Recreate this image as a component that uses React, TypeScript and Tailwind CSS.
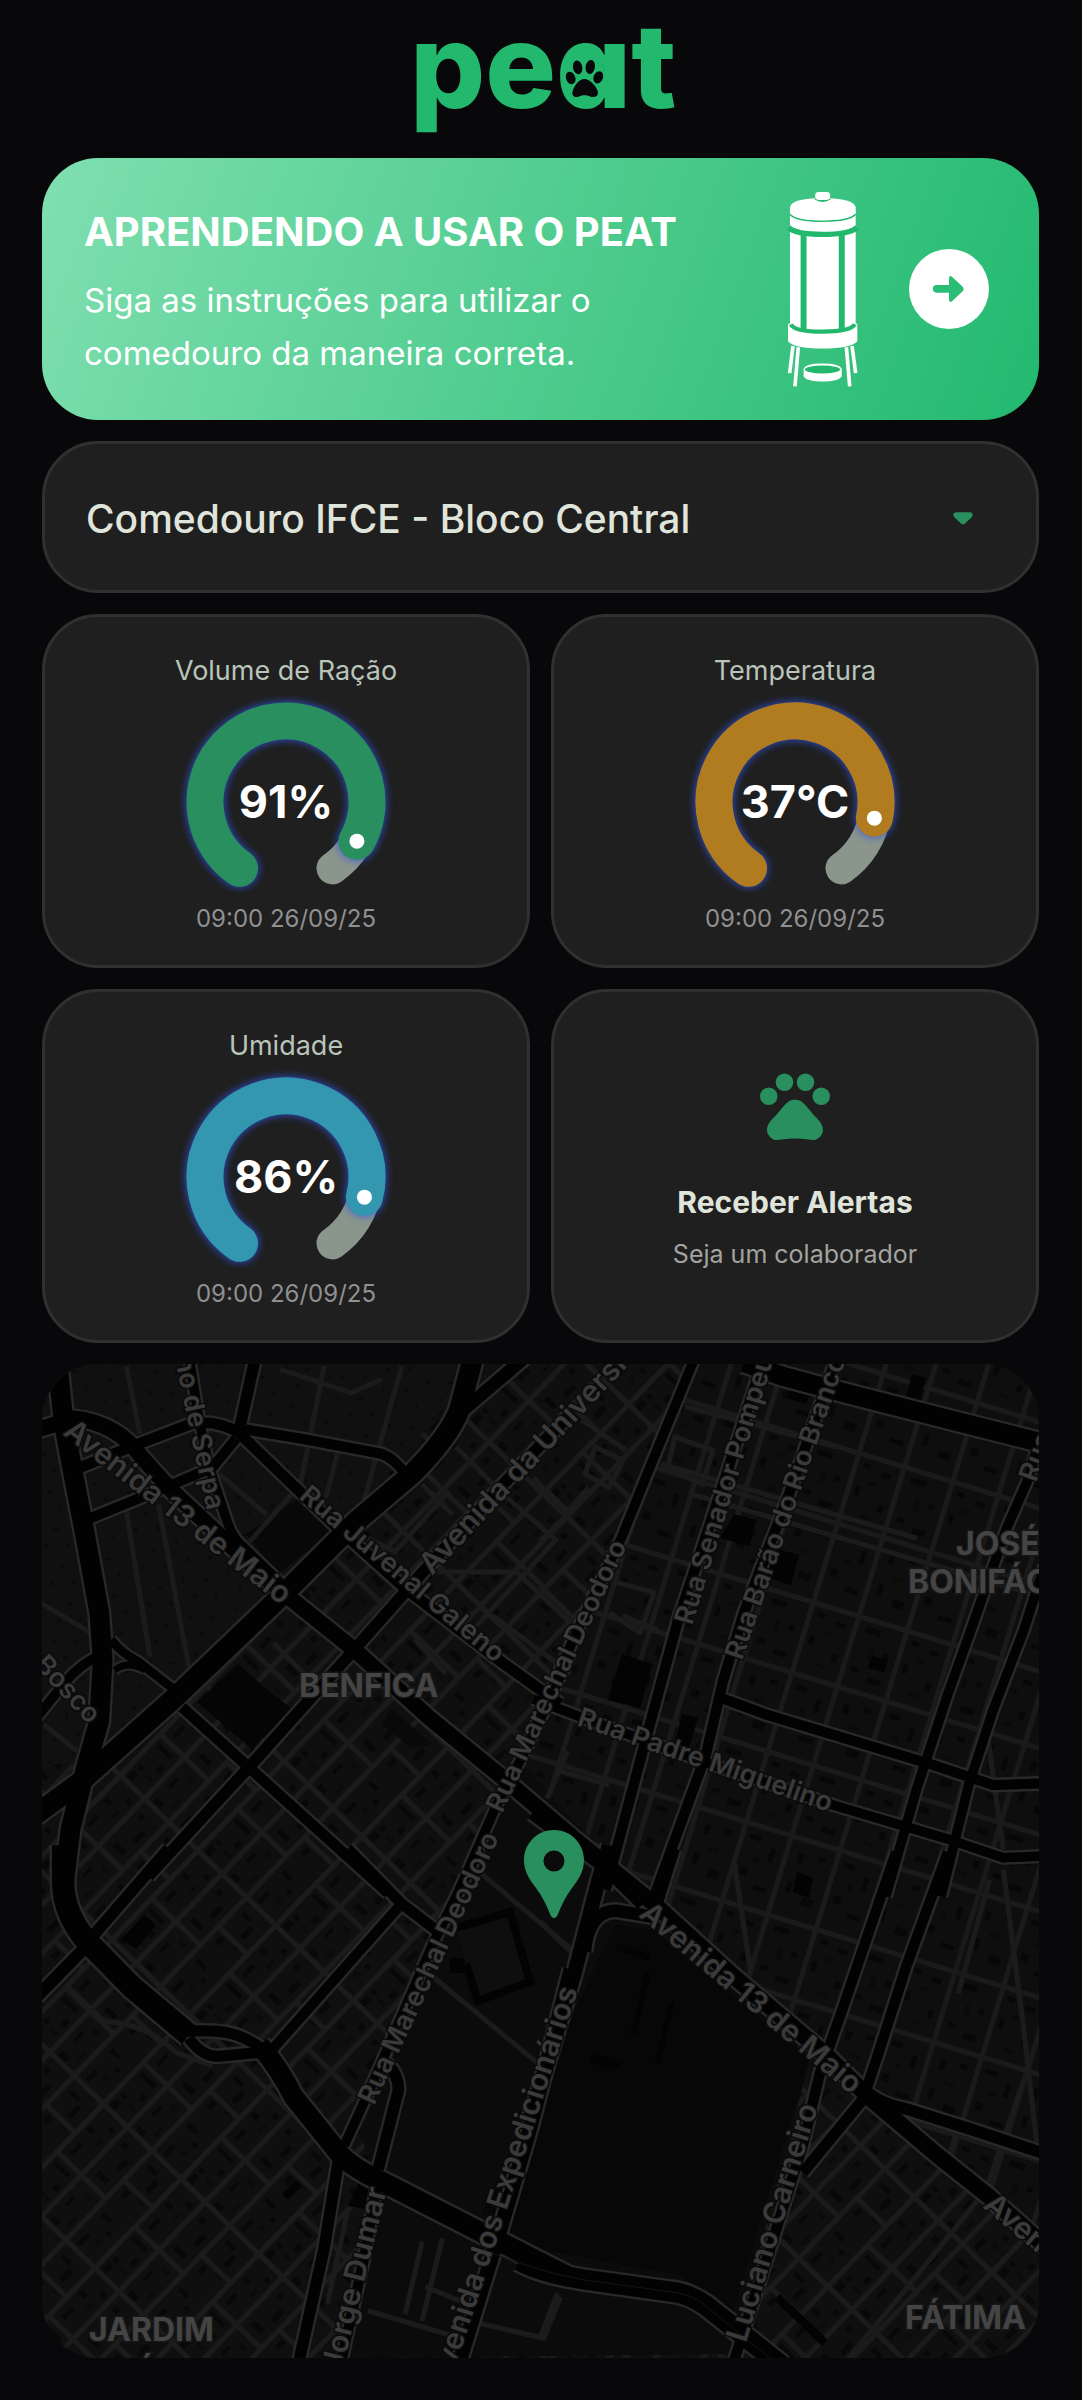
import React from "react";
import { MdPets } from "react-icons/md";

/* ---------- Logo ---------- */

function Logo() {
  return (
    <svg
      viewBox="0 0 270 158"
      className="h-[158px] w-[270px] overflow-visible"
      role="img"
      aria-label="peat"
    >
      <text
        x="4"
        y="108"
        className="fill-[#22b96f] font-['Inter',sans-serif] text-[118px] font-extrabold [font-feature-settings:'cv11']"
      >
        peat
      </text>
      <ellipse cx="178" cy="78" rx="22" ry="25" fill="#22b96f" />
      <g transform="translate(-26 0) scale(0.3333)" fill="#09090b">
        <ellipse cx="572" cy="234" rx="14" ry="19" transform="rotate(-22 572 234)" />
        <ellipse cx="593" cy="202" rx="14" ry="21" transform="rotate(-10 593 202)" />
        <ellipse cx="631" cy="201" rx="14" ry="21" transform="rotate(10 631 201)" />
        <ellipse cx="655" cy="232" rx="14" ry="19" transform="rotate(22 655 232)" />
        <path d="M613 237C598 237 585 254 579 270C572 288 585 294 596 290C606 284 622 284 632 290C648 294 658 286 652 270C645 254 628 237 613 237Z" />
      </g>
    </svg>
  );
}

/* ---------- Banner ---------- */

function FeederIcon() {
  return (
    <svg viewBox="140 118 220 596" className="h-[199px] w-[73px] shrink-0" aria-hidden="true">
      <g stroke="#fff" strokeWidth="11">
        <path d="M161 586L151 668M177 590L167 708M322 590L332 708M339 586L350 668" />
      </g>
      <path
        d="M146 520Q150 516 155 522H346Q352 516 355 520V572Q335 594 250 594Q165 594 146 572Z"
        fill="#fff"
      />
      <path d="M152 236H350V526Q325 542 250 542Q175 542 152 526Z" fill="#fff" />
      <path d="M184 246H202V540H184ZM299 246H317V540H299Z" fill="#22b96f" />
      <path d="M155 521Q165 543 250 543Q335 543 347 521" fill="none" stroke="#22b96f" strokeWidth="13" />
      <path d="M152 180H350V222Q330 242 250 242Q170 242 152 222Z" fill="#fff" />
      <path d="M148 230Q170 250 250 250Q330 250 354 230" fill="none" stroke="#22b96f" strokeWidth="16" />
      <path d="M152 189Q170 210 250 210Q330 210 350 189" fill="none" stroke="#22b96f" strokeWidth="5" />
      <path
        d="M152 168Q156 141 250 140Q344 141 350 168V184Q338 207 250 208Q162 207 152 184Z"
        fill="#fff"
      />
      <path d="M228 142Q250 156 273 142" fill="none" stroke="#22b96f" strokeWidth="6" />
      <rect x="228" y="122" width="45" height="24" rx="10" fill="#fff" />
      <path
        d="M193 656Q197 639 250 639Q303 639 308 656V678Q298 693 250 693Q202 693 193 678Z"
        fill="#fff"
      />
      <ellipse cx="250" cy="657" rx="53" ry="12" fill="#22b96f" />
    </svg>
  );
}

function Banner() {
  return (
    <section className="flex items-center rounded-[56px] bg-[linear-gradient(110deg,#7fdfb0_0%,#22b96f_100%)] pt-[50px] pr-[50px] pb-10 pl-[42px] text-white">
      <div className="flex-1">
        <h1 className="text-[40px] leading-[48px] font-bold">APRENDENDO A USAR O PEAT</h1>
        <p className="mt-[18px] max-w-[560px] text-[33px] leading-[53px]">
          Siga as instruções para utilizar o comedouro da maneira correta.
        </p>
      </div>
      <div className="-my-10 flex -translate-y-[5px] items-center gap-[50px]">
        <FeederIcon />
        <button
          type="button"
          aria-label="Abrir instruções"
          className="flex size-20 items-center justify-center rounded-full bg-white"
        >
          <svg viewBox="510 296 240 240" className="size-20" aria-hidden="true">
            <path
              d="M593 404H630V385Q630 372 640 380L671 409Q677 416 671 423L640 452Q630 460 630 447V427H593A11 11 0 0 1 593 404Z"
              fill="#2bbd76"
            />
          </svg>
        </button>
      </div>
    </section>
  );
}

/* ---------- Feeder picker ---------- */

function FeederSelect() {
  return (
    <div className="relative">
      <select
        aria-label="Comedouro"
        className="h-[152px] w-full appearance-none rounded-[56px] border-[3px] border-[#303030] bg-[#1f1f1f] pt-1 pr-32 pl-[41px] text-[39px] font-medium text-[#e0e5dc]"
      >
        <option>Comedouro IFCE - Bloco Central</option>
      </select>
      <svg
        viewBox="0 0 60 38"
        className="pointer-events-none absolute top-[71px] right-[66px] h-[13px] w-5"
        aria-hidden="true"
      >
        <path
          d="M10 0H50C59 0 62 9 56 15L36 34Q30 40 24 34L4 15C-2 9 1 0 10 0Z"
          fill="#298f5e"
        />
      </svg>
    </div>
  );
}

/* ---------- Gauges ---------- */

const CENTER = 110;
const RADIUS = 81;
const GAP = 35;

// Angles run clockwise from the bottom of the dial.
function point(angle: number) {
  const a = (angle * Math.PI) / 180;
  return { x: CENTER - RADIUS * Math.sin(a), y: CENTER + RADIUS * Math.cos(a) };
}

function arc(from: number, to: number) {
  const a = point(from);
  const b = point(to);
  return `M${a.x} ${a.y}A${RADIUS} ${RADIUS} 0 ${to - from > 180 ? 1 : 0} 1 ${b.x} ${b.y}`;
}

type GaugeProps = {
  label: string;
  value: string;
  fraction: number;
  time: string;
  color: string;
};

function GaugeCard({ label, value, fraction, time, color }: GaugeProps) {
  const end = GAP + (360 - 2 * GAP) * fraction;
  const dot = point(end);
  return (
    <article className="flex flex-col items-center rounded-[56px] border-[3px] border-[#303030] bg-[#1f1f1f] pt-9 pb-7">
      <h2 className="text-[27px] leading-9 text-[#b9c4ba]">{label}</h2>
      <svg
        viewBox="0 0 220 200"
        className="mt-[3px] h-[200px] w-[220px]"
        role="img"
        aria-label={`${label}: ${value}`}
      >
        <path
          d={arc(GAP, 360 - GAP)}
          fill="none"
          stroke="#8a958c"
          strokeWidth="32"
          strokeLinecap="round"
        />
        <g className="drop-shadow-[0_0_4px_#2f55e0]">
          <path d={arc(GAP, end)} fill="none" stroke={color} strokeWidth="37" strokeLinecap="round" />
        </g>
        <circle cx={dot.x} cy={dot.y} r="7.5" fill="#fff" />
        <text
          x={CENTER}
          y="126"
          textAnchor="middle"
          className="fill-white font-['Inter',sans-serif] text-[45px] font-bold"
        >
          {value}
        </text>
      </svg>
      <time className="mt-[9px] text-2xl leading-9 text-[#909090]">{time}</time>
    </article>
  );
}

function AlertsCard() {
  return (
    <button
      type="button"
      className="flex flex-col items-center justify-center rounded-[56px] border-[3px] border-[#303030] bg-[#1f1f1f] pt-0.5"
    >
      <MdPets className="size-[84px] text-[#298f5e]" aria-hidden="true" />
      <span className="mt-[35px] text-[30px] leading-10 font-bold text-[#e0e5dc]">
        Receber Alertas
      </span>
      <span className="mt-3.5 text-[25px] leading-9 text-[#a3a3a0]">Seja um colaborador</span>
    </button>
  );
}

/* ---------- Map ---------- */

type Road = [width: number, d: string];
type Tile = { transform: string; major: Road[]; minor: string };

const TILES: Tile[] = [
  {
    transform: "translate(-12 -15) scale(0.338)",
    major: [
      [58, "M80 30L100 220L130 380L165 560L205 780L215 920L205 1100L165 1240L120 1420L98 1600"],
      [60, "M0 1390L150 1280L430 1030L760 715L960 515L1130 370Q1240 260 1270 180L1310 30"],
      [38, "M1270 190L1330 140L1470 20"],
      [46, "M20 240L130 205Q260 220 330 320L420 420L640 625L760 730L960 890L1180 1090L1400 1270L1600 1440"],
      [32, "M150 350L310 285L480 220Q560 210 620 250L770 395L900 520L1100 700L1400 930L1568 1050"],
      [30, "M620 235L800 265L1040 310Q1080 325 1110 370"],
      [34, "M668 20L620 235"],
      [30, "M180 500L400 410L540 350L610 265"],
      [28, "M470 20L500 210L530 350L580 500Q595 550 620 575L750 700"],
      [34, "M350 1560L650 1235L950 900L1180 640L1400 400L1600 190"],
      [32, "M450 1060L650 1240L1060 1610"],
      [26, "M240 860Q270 900 320 925L430 1010"],
      [28, "M20 1090L100 990Q150 930 210 905"],
      [20, "M250 950Q290 920 340 950"],
      [28, "M1270 1600L1380 1350L1470 1180L1600 900"],
    ],
    minor:
      "M285 50L325 250M285 480L355 910M380 460L470 940M870 50L800 400L650 570M1100 50L985 460M915 290L875 440M560 370L700 490M30 750L180 840M40 1110L140 1190M720 870L860 1010M1260 290L1400 430L1550 560M1160 400L1250 490M1200 660L1440 660L1600 810M1320 820L1560 560M1370 790L1600 960M1140 860L1230 960M1000 560L1080 600L1240 420M1490 380L1600 500M740 60L950 130L1040 90",
  },
  {
    transform: "translate(498 -15) scale(0.3457 0.338)",
    major: [
      [28, "M-40 1180L100 850L235 560L310 370L450 20"],
      [30, "M190 1600L310 1140L400 800L520 430L650 20"],
      [30, "M330 1620L480 1200L530 980L590 780L720 430L860 20"],
      [56, "M590 40L700 80L900 135L1150 200L1460 280"],
      [28, "M1450 250L1410 390L1350 530L1240 850L1180 1020L1090 1300L1000 1620"],
      [28, "M1460 640L1400 830L1310 1070L1240 1290L1160 1620"],
      [30, "M530 1035L650 1080L1120 1225L1310 1290L1460 1285"],
      [28, "M-20 1035L120 1090L470 1220L850 1350L1180 1450L1340 1505L1460 1500"],
      [46, "M-20 1370L190 1530L300 1640"],
    ],
    minor:
      "M120 210L250 300M130 370L200 410L240 330L160 290ZM20 420L80 480L140 410M0 570L80 490M420 170L860 290M350 340L1090 560M390 260L500 300L470 400L370 350ZM440 430L1440 730M220 690L330 720L290 840L200 780M240 790L340 830M0 700L90 790M1290 1110L1340 1480M80 1190L20 1330M60 1250L200 1290",
  },
  {
    transform: "translate(-12 495) scale(0.338 0.3448)",
    major: [
      [66, "M98 -40L98 70Q100 160 170 240L300 370L470 510"],
      [32, "M460 500Q540 495 590 505Q640 515 700 560"],
      [32, "M470 520Q510 575 560 572L690 560"],
      [58, "M680 540Q740 610 780 690L920 860Q960 900 1050 940L1350 1090L1600 1215"],
      [36, "M20 400L170 250"],
      [34, "M180 230L410 -30"],
      [30, "M710 560L1090 140"],
      [32, "M940 -30L1100 130L1220 220"],
      [28, "M930 830L1000 680L1190 250L1330 -30"],
      [34, "M1030 900L1090 670Q1090 620 1050 590"],
      [34, "M915 860L870 1130L795 1460"],
      [30, "M1030 920L990 1150L920 1460"],
      [42, "M1600 320L1480 780L1390 1080L1270 1460"],
    ],
    minor:
      "M1320 30L1600 260M1190 340L1500 590M110 370L220 470Q350 480 430 560L540 600M1160 1110L1110 1320M1220 1100L1160 1340M1170 1240L1340 1310M1000 1310L1240 1380M1570 1270L1520 1390L1300 1340M940 1020L880 1290",
  },
  {
    transform: "translate(498 495) scale(0.3457 0.3448)",
    major: [
      [46, "M60 -90L330 130L560 340L830 570L950 690L1150 860L1300 980L1470 1130"],
      [42, "M-30 760L100 330L170 60L200 -40"],
      [36, "M130 270Q140 150 220 150L340 170"],
      [30, "M340 130L390 -30"],
      [30, "M1030 -20L870 450L810 620L760 830L650 1180L560 1460"],
      [30, "M1180 -20L1060 310L980 560L940 680"],
      [34, "M940 670Q980 710 1060 725L1250 785L1460 855"],
      [32, "M940 690L760 910"],
      [58, "M-60 1165Q0 1200 130 1220L380 1255Q430 1260 480 1295L700 1470"],
    ],
    minor:
      "M0 180L110 290M560 0L610 330M1340 30L1400 500L1440 850M1300 60L1210 390M50 1260L0 1390M1210 780L1180 870M1080 760L1075 790M1400 640L1290 960L1040 1270L890 1450",
  },
];

const BUILDINGS =
  "M395 250h14v10h-14zM735 185l22 6l-8 30l-26 -8zM692 150l22 6l-6 26l-30 -8zM80 575l22 -24l12 10l-20 24zM830 292l16 4l-4 12l-16 -4zM750 24l18 6l-4 10l-20 -6zM870 10l14 4l-6 24l-14 -4zM580 290l30 10l-12 44l-32 -8zM640 350l16 4l-12 40l-14 -4zM755 508l16 6l-4 20l-16 -6zM535 600l-14 46l-6 -2l14 -46zM608 610l-14 60l-5 -1l14 -60zM632 640l-14 60l-5 -1l14 -60zM550 690l32 8l-12 8l-22 -8zM576 580l32 10l-2 6l-32 -10zM316 820l16 6l-4 20l-22 -4zM240 830l14 -14l6 6l-14 14zM738 930l48 46l-6 6l-48 -46z";

type Label = { text: string; x: number; y: number; angle: number; size: number; anchor?: "end" };

const LARGE = 30;
const SMALL = 27;

const STREETS: Label[] = [
  { text: "Avenida 13 de Maio", x: 20, y: 70, angle: 38, size: LARGE },
  { text: "Rua Juvenal Galeno", x: 256, y: 134, angle: 40, size: SMALL },
  { text: "Avenida da Universidade", x: 390, y: 212, angle: -47, size: LARGE },
  { text: "Rua Marechal Deodoro", x: 460, y: 450, angle: -65, size: SMALL },
  { text: "Rua Marechal Deodoro", x: 332, y: 742, angle: -65, size: SMALL },
  { text: "Rua Senador Pompeu", x: 650, y: 262, angle: -73, size: SMALL },
  { text: "Rua Barão do Rio Branco", x: 700, y: 297, angle: -71, size: SMALL },
  { text: "Rua Solon Pinheiro", x: 994, y: 119, angle: -70, size: SMALL },
  { text: "Rua Padre Miguelino", x: 534, y: 361, angle: 19, size: SMALL },
  { text: "Avenida 13 de Maio", x: 596, y: 552, angle: 40, size: LARGE },
  { text: "Avenida 13 de Maio", x: 940, y: 843, angle: 40, size: LARGE },
  { text: "Avenida dos Expedicionários", x: 536, y: 626, angle: -72, size: LARGE, anchor: "end" },
  { text: "Luciano Carneiro", x: 776, y: 743, angle: -73, size: LARGE, anchor: "end" },
  { text: "Rua Jorge Dumar", x: 345, y: 826, angle: -76, size: LARGE, anchor: "end" },
  { text: "Rua Justiniano de Serpa", x: 165, y: 147, angle: 78, size: SMALL, anchor: "end" },
  { text: "Rua Dom Bosco", x: 47, y: 361, angle: 47, size: SMALL, anchor: "end" },
];

const DISTRICTS: Omit<Label, "angle" | "size">[] = [
  { text: "BENFICA", x: 257, y: 333 },
  { text: "JOSÉ", x: 914, y: 191 },
  { text: "BONIFÁCIO", x: 866, y: 229 },
  { text: "JARDIM", x: 47, y: 977 },
  { text: "AMÉRICA", x: 40, y: 1020 },
  { text: "FÁTIMA", x: 863, y: 965 },
];

function MapCard() {
  return (
    <section className="overflow-hidden rounded-[56px]">
      <svg
        viewBox="0 0 997 994"
        className="block w-full"
        role="img"
        aria-label="Mapa com a localização do comedouro"
      >
        <defs>
          <pattern id="blocks-sw" width="124" height="108" patternUnits="userSpaceOnUse" patternTransform="translate(14 8) rotate(-46)">
            <rect width="124" height="108" fill="#0f0f0f" />
            <path
              d="M6 8h10v7h-10zM6 44h6v10h-6zM20 9h5v6h-5zM30 24h8v6h-8zM48 8h5v20h-5zM68 12h14v5h-14zM96 8h6v8h-6zM110 24h6v6h-6zM70 46h6v14h-6zM88 56h14v6h-14zM8 80h14v5h-14zM34 94h5v6h-5zM44 78h5v12h-5zM72 78h9v6h-9zM94 92h14v6h-14zM110 78h5v12h-5zM28 44h12v4h-12zM108 44h6v6h-6z"
              fill="#080808"
            />
            <path
              d="M18 20h4v10h-4zM90 24h10v4h-10zM14 60h12v4h-12zM46 52h5v8h-5zM80 94h4v8h-4zM20 92h6v6h-6z"
              fill="#0b0b0b"
            />
            <path d="M0 2.5H124M0 36H124M0 70H124M2.5 0V108M60 0V70M86 70V108" stroke="#1b1b1b" strokeWidth="5" />
          </pattern>
          <pattern id="blocks-ne" width="98" height="156" patternUnits="userSpaceOnUse" patternTransform="translate(20 6) rotate(17)">
            <rect width="98" height="156" fill="#0e0e0e" />
            <path
              d="M10 10h8v5h-8zM30 14h10v5h-10zM9 34h5v10h-5zM36 46h6v8h-6zM60 10h16v6h-16zM84 30h6v6h-6zM58 52h8v5h-8zM76 58h14v6h-14zM10 86h12v5h-12zM34 94h5v14h-5zM10 120h8v8h-8zM28 134h14v5h-14zM62 90h6v10h-6zM82 88h8v5h-8zM60 120h5v12h-5zM78 132h12v8h-12z"
              fill="#070707"
            />
            <path
              d="M20 26h8v4h-8zM70 30h5v12h-5zM22 60h10v4h-10zM20 106h6v6h-6zM72 110h10v4h-10z"
              fill="#0a0a0a"
            />
            <path d="M0 2.5H98M0 76H98M2.5 0V156M50 0V156" stroke="#1a1a1a" strokeWidth="5" />
          </pattern>
          <pattern id="blocks-plain" width="46" height="38" patternUnits="userSpaceOnUse" patternTransform="rotate(-10)">
            <rect width="46" height="38" fill="#101010" />
            <path d="M8 6h3v5h-3zM28 12h6v3h-6zM16 26h4v4h-4zM38 28h3v5h-3z" fill="#0b0b0b" />
          </pattern>
        </defs>

        <rect width="997" height="994" fill="url(#blocks-sw)" />
        <path d="M0 0H440L240 232L130 330L40 400H0Z" fill="url(#blocks-plain)" />
        <path d="M650 0L533 272L484 367L470 400L785 692L997 878V0Z" fill="url(#blocks-ne)" />
        <path
          d="M480 400L620 555L768 695L690 990L300 994L340 830L318 770L390 600Z"
          fill="#0b0b0b"
        />
        <path
          d="M574 560L612 567L768 695L690 950L640 912L498 885L440 850L536 640Z"
          fill="#070707"
        />
        <path d="M204 170L258 133L296 163L236 210Z" fill="#080808" />
        <path d="M155 338L196 300L230 330L250 345L210 385Z" fill="#050505" />
        <path d="M350 345L390 380L370 385L340 360Z" fill="#090909" />
        <path d={BUILDINGS} fill="#030303" />

        <g fill="none" stroke="#1b1b1b" strokeWidth="15" strokeLinejoin="round">
          {TILES.map((tile) => (
            <path key={tile.transform} d={tile.minor} transform={tile.transform} />
          ))}
        </g>
        <g fill="none" stroke="#282828" strokeLinejoin="round">
          {TILES.map((tile) => (
            <g key={tile.transform} transform={tile.transform}>
              {tile.major.map(([width, d]) => (
                <path key={d} d={d} strokeWidth={width + 14} />
              ))}
            </g>
          ))}
        </g>
        <g fill="none" stroke="#020202" strokeLinejoin="round">
          {TILES.map((tile) => (
            <g key={tile.transform} transform={tile.transform}>
              {tile.major.map(([width, d]) => (
                <path key={d} d={d} strokeWidth={width} />
              ))}
            </g>
          ))}
        </g>
        <path
          d="M449 889Q498 908 543 916L630 928Q650 930 664 942L735 1000"
          fill="none"
          stroke="#151515"
        />
        <path
          d="M414 564L468 548L488 618L436 637L424 600"
          fill="#0e0e0e"
          stroke="#030303"
          strokeWidth="8"
        />
        <rect x="408" y="594" width="14" height="15" fill="#030303" />

        <g className="font-['Inter',sans-serif] font-semibold" fill="#3a3a3a" stroke="#0a0a0a" strokeWidth="3" paintOrder="stroke">
          {STREETS.map((s) => (
            <text
              key={`${s.text}-${s.x}`}
              transform={`translate(${s.x} ${s.y}) rotate(${s.angle})`}
              fontSize={s.size}
              textAnchor={s.anchor}
            >
              {s.text}
            </text>
          ))}
        </g>
        <g className="font-['Inter',sans-serif] text-[32px] font-bold" fill="#444444" stroke="#161616" strokeWidth="3" paintOrder="stroke">
          {DISTRICTS.map((d) => (
            <text key={d.text} x={d.x} y={d.y}>
              {d.text}
            </text>
          ))}
        </g>

        <path
          transform="translate(482 466)"
          fillRule="evenodd"
          fill="#298f5e"
          d="M30 0C13.4 0 0 13.4 0 30C0 42 6 50 12 58C18 66 23 76 26 84Q27.500 88 30 88Q32.500 88 34 84C37 76 42 66 48 58C54 50 60 42 60 30C60 13.4 46.6 0 30 0ZM30 20.5A10.500 10.500 0 1 1 30 41.500A10.500 10.500 0 1 1 30 20.500Z"
        />
      </svg>
    </section>
  );
}

export default function App() {
  return (
    <div className="min-h-screen bg-[#08080a] pr-[43px] pb-[42px] pl-[42px] font-['Inter',sans-serif]">
      <header className="flex justify-center">
        <Logo />
      </header>
      <main className="flex flex-col gap-[21px]">
        <Banner />
        <FeederSelect />
        <div className="grid grid-cols-2 gap-[21px]">
          <GaugeCard label="Volume de Ração" value="91%" fraction={0.91} time="09:00 26/09/25" color="#298f5e" />
          <GaugeCard label="Temperatura" value="37°C" fraction={0.85} time="09:00 26/09/25" color="#b17c1f" />
          <GaugeCard label="Umidade" value="86%" fraction={0.86} time="09:00 26/09/25" color="#3497b0" />
          <AlertsCard />
        </div>
        <MapCard />
      </main>
    </div>
  );
}
